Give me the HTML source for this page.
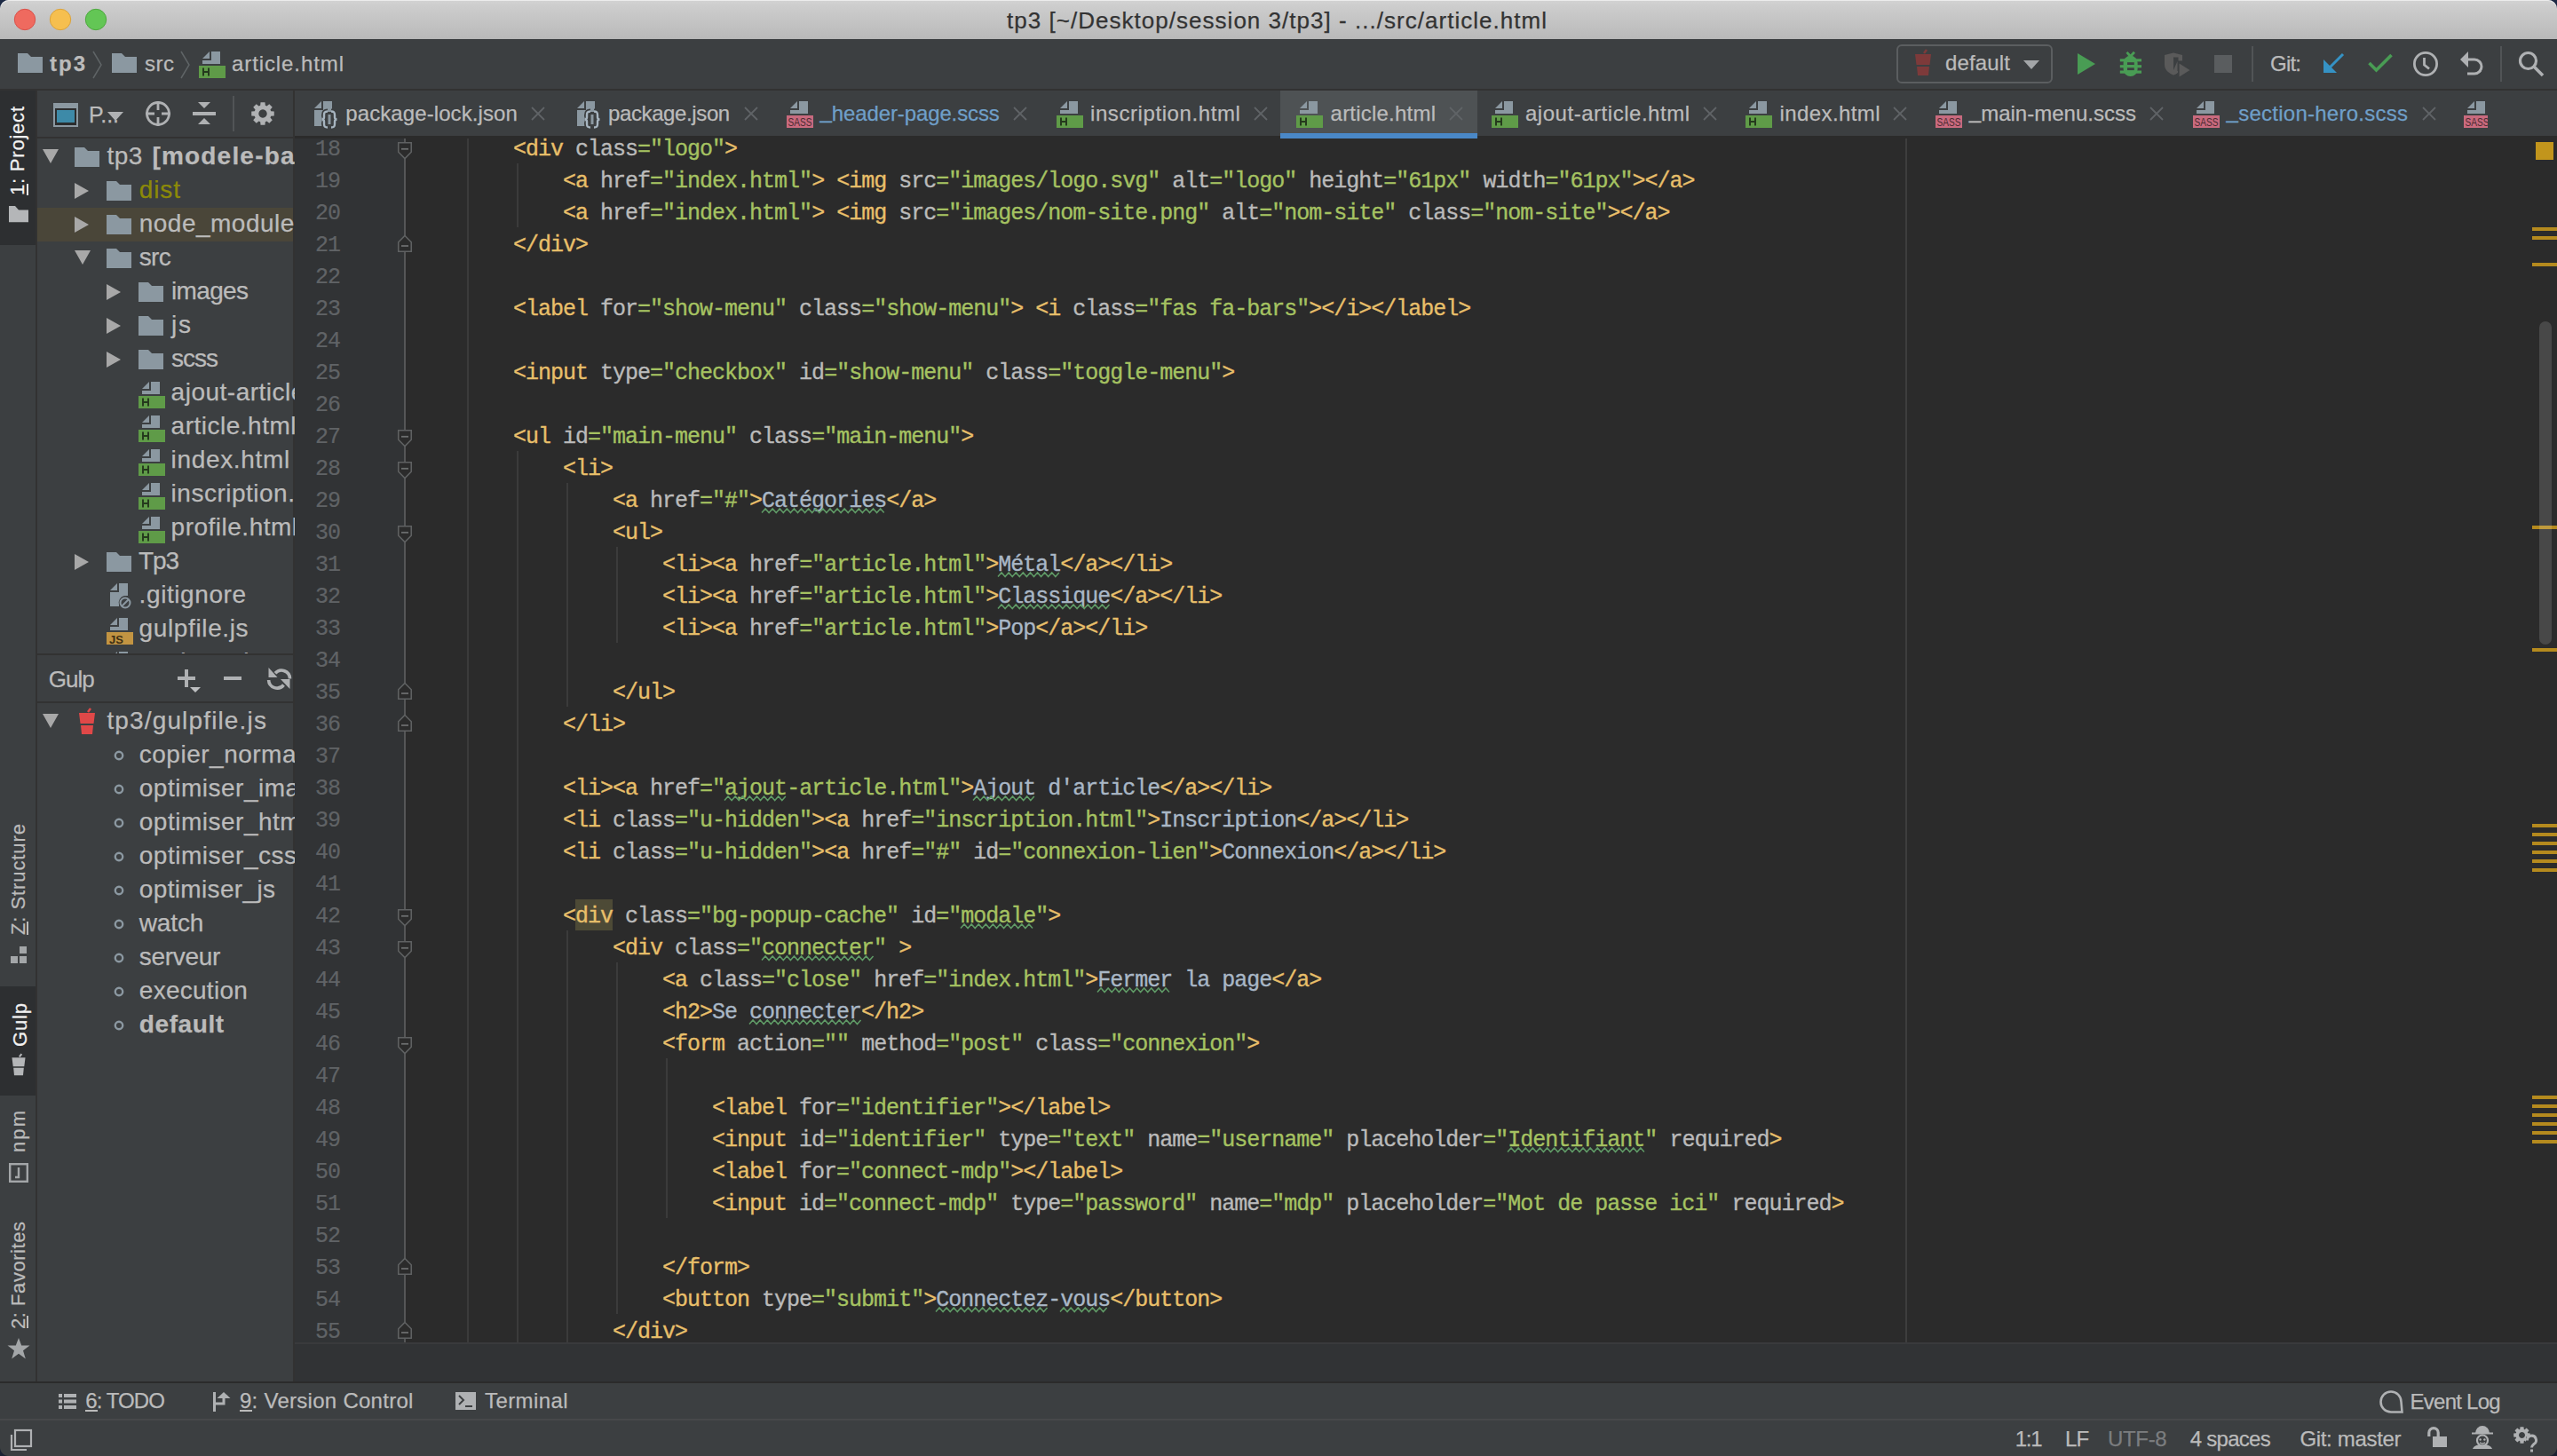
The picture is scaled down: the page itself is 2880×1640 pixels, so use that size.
<!DOCTYPE html>
<html><head><meta charset="utf-8"><title>tp3</title><style>*{margin:0;padding:0;box-sizing:border-box}
html,body{width:2880px;height:1640px;overflow:hidden;background:#3c3f41}
body{position:relative;font-family:"Liberation Sans",sans-serif}
.a{position:absolute}
svg.a{overflow:visible}
.t{position:absolute;white-space:pre;line-height:1;font-family:"Liberation Sans",sans-serif;-webkit-text-stroke:0.25px}
.code{position:absolute;left:522px;white-space:pre;font-family:"Liberation Mono",monospace;font-size:25px;letter-spacing:-1px;line-height:36px;color:#a9b7c6;-webkit-text-stroke:0.35px}
.ln{position:absolute;left:332px;width:51px;text-align:right;white-space:pre;font-family:"Liberation Mono",monospace;font-size:25px;letter-spacing:-1px;line-height:36px;color:#606366;-webkit-text-stroke:0.2px}
</style></head><body>
<div class="a" style="left:0px;top:0px;width:2880px;height:1640px;background:#3c3f41;"></div>
<div class="a" style="left:0;top:0;width:2880px;height:44px;background:#1d2a45"></div>
<div class="a" style="left:0;top:0;width:2880px;height:44px;border-radius:10px 10px 0 0;background:linear-gradient(#d3d3d3,#cdcdcd 15%,#b9b9b9);box-shadow:inset 0 1px 0 #ececec"></div>
<svg class="a" style="left:15px;top:9px;" width="26" height="26" viewBox="0 0 26 26"><circle cx="13" cy="13" r="11.7" fill="#ef6a5f" stroke="#d9514a" stroke-width="1"/></svg>
<svg class="a" style="left:55px;top:9px;" width="26" height="26" viewBox="0 0 26 26"><circle cx="13" cy="13" r="11.7" fill="#f6bf4f" stroke="#dba33b" stroke-width="1"/></svg>
<svg class="a" style="left:95px;top:9px;" width="26" height="26" viewBox="0 0 26 26"><circle cx="13" cy="13" r="11.7" fill="#63c655" stroke="#4ea83f" stroke-width="1"/></svg>
<div class="t" style="left:1134.0px;top:10.0px;font-size:26px;color:#333333;letter-spacing:1.027px;">tp3 [~/Desktop/session 3/tp3] - .../src/article.html</div>
<div class="a" style="left:0px;top:100px;width:2880px;height:2px;background:#323232;"></div>
<svg class="a" style="left:20px;top:60px;" width="28" height="22" viewBox="0 0 28 22"><path d="M0 0H11L15 4H28V22H0Z" fill="#8b98a1"/></svg>
<div class="t" style="left:56.0px;top:60.0px;font-size:24px;color:#bbbbbb;font-weight:700;letter-spacing:2.000px;">tp3</div>
<svg class="a" style="left:104px;top:58px;" width="12" height="30" viewBox="0 0 12 30"><path d="M1 0L10 15L1 30" stroke="#5f6466" stroke-width="1.5" fill="none"/></svg>
<svg class="a" style="left:126px;top:60px;" width="28" height="22" viewBox="0 0 28 22"><path d="M0 0H11L15 4H28V22H0Z" fill="#8b98a1"/></svg>
<div class="t" style="left:163.0px;top:60.0px;font-size:24px;color:#bbbbbb;letter-spacing:0.500px;">src</div>
<svg class="a" style="left:203px;top:58px;" width="12" height="30" viewBox="0 0 12 30"><path d="M1 0L10 15L1 30" stroke="#5f6466" stroke-width="1.5" fill="none"/></svg>
<svg class="a" style="left:224px;top:58px;" width="30" height="30" viewBox="0 0 30 30"><path d="M4 8L12 0V8Z" fill="#8b98a1"/><path d="M14 0H24V14H4V10H14Z" fill="#8b98a1"/><rect x="0" y="16" width="30" height="14" fill="#5f9b48"/><path d="M5 18.5V27.5M11 18.5V27.5M5 23H11" stroke="#253a1d" stroke-width="2" fill="none"/></svg>
<div class="t" style="left:261.0px;top:60.0px;font-size:24px;color:#bbbbbb;letter-spacing:0.906px;">article.html</div>
<div class="a" style="left:2136px;top:50px;width:176px;height:44px;border:2px solid #5b5e60;border-radius:6px"></div>
<svg class="a" style="left:2156px;top:56px;" width="20" height="30" viewBox="0 0 20 30"><path d="M11 4L14 0" stroke="#7d3a3a" stroke-width="2.5"/><path d="M1 5H19L17.5 17H2.5Z" fill="#7d3a3a"/><path d="M3 19H17L16 29H4Z" fill="#7d3a3a"/></svg>
<div class="t" style="left:2191.0px;top:59.0px;font-size:24px;color:#bbbbbb;letter-spacing:0.156px;">default</div>
<svg class="a" style="left:2279px;top:68px;" width="18" height="10" viewBox="0 0 18 10"><path d="M0 0H18L9 10Z" fill="#a3a6a8"/></svg>
<svg class="a" style="left:2340px;top:60px;" width="20" height="24" viewBox="0 0 20 24"><path d="M0 0L20 12L0 24Z" fill="#499c54"/></svg>
<svg class="a" style="left:2387px;top:58px;" width="26" height="30" viewBox="0 0 26 30"><path d="M8.5 0.8L12.6 5.5M17 0.8L12.6 5.5" stroke="#499c54" stroke-width="2.8"/><rect x="4.6" y="4.8" width="16" height="23.2" rx="8" fill="#499c54"/><rect x="0.8" y="8.3" width="24.2" height="3.1" fill="#499c54"/><rect x="0.8" y="15.2" width="24.2" height="3.1" fill="#499c54"/><rect x="0.8" y="21.5" width="24.2" height="3.2" fill="#499c54"/><rect x="9" y="12.2" width="7.8" height="2.8" fill="#3c3f41"/><rect x="9" y="18.3" width="7.8" height="2.8" fill="#3c3f41"/></svg>
<svg class="a" style="left:2437px;top:58px;" width="32" height="31" viewBox="0 0 32 31"><path d="M1 4L11 1.5L21 4V15C21 21 16 24.5 11 26.5C6 24.5 1 21 1 15Z" fill="#5a5a5a"/><path d="M11 6.5H16.5V10.5H21V22L11 22Z" fill="#3c3f41"/><path d="M11 6.5V21.5L15 19V10.5" fill="#3c3f41"/><path d="M15.5 11V24C13.5 25.5 12 26 11 26.5V21" fill="#5a5a5a"/><path d="M16.8 12L31 21L16.8 30Z" fill="#5a5a5a" stroke="#3c3f41" stroke-width="1.5"/></svg>
<div class="a" style="left:2494px;top:62px;width:20px;height:20px;background:#5a5d5f;"></div>
<div class="a" style="left:2536px;top:52px;width:2px;height:40px;background:#515456;"></div>
<div class="t" style="left:2557.0px;top:60.0px;font-size:24px;color:#bbbbbb;letter-spacing:-0.781px;">Git:</div>
<svg class="a" style="left:2617px;top:59px;" width="24" height="24" viewBox="0 0 24 24"><path d="M22 2L7 17" stroke="#3592c4" stroke-width="3"/><path d="M0 8V23H15Z" fill="#3592c4"/></svg>
<svg class="a" style="left:2667px;top:59px;" width="28" height="24" viewBox="0 0 28 24"><path d="M1.5 12L9.5 20L26.5 3" stroke="#499c54" stroke-width="3.6" fill="none"/></svg>
<svg class="a" style="left:2717px;top:57px;" width="30" height="30" viewBox="0 0 30 30"><circle cx="15" cy="15" r="12.6" stroke="#afb1b3" stroke-width="2.8" fill="none"/><path d="M13.5 8V16L19 20.5" stroke="#afb1b3" stroke-width="2.8" fill="none"/></svg>
<svg class="a" style="left:2771px;top:57px;" width="28" height="28" viewBox="0 0 28 28"><path d="M8 10H16A8 8 0 0 1 16 26H8" stroke="#afb1b3" stroke-width="3" fill="none"/><path d="M0 10L9 1V19Z" fill="#afb1b3"/></svg>
<div class="a" style="left:2816px;top:52px;width:2px;height:40px;background:#515456;"></div>
<svg class="a" style="left:2836px;top:57px;" width="30" height="30" viewBox="0 0 30 30"><circle cx="11.5" cy="11.5" r="9" stroke="#afb1b3" stroke-width="3.2" fill="none"/><path d="M18 18L28 28" stroke="#afb1b3" stroke-width="3.6"/></svg>
<div class="a" style="left:40px;top:102px;width:2px;height:1455px;background:#323232;"></div>
<div class="a" style="left:0px;top:102px;width:40px;height:174px;background:#2d2f31;"></div>
<div class="a" style="left:0px;top:1111px;width:40px;height:123px;background:#2d2f31;"></div>
<div class="t" style="left:9px;top:220px;font-size:22px;color:#f2f2f2;letter-spacing:0.785px;transform-origin:0 0;transform:rotate(-90deg)">1: Project</div>
<div class="a" style="left:30px;top:207px;width:2px;height:13px;background:#f2f2f2;"></div>
<svg class="a" style="left:10px;top:232px;" width="22" height="19" viewBox="0 0 22 19"><path d="M0 0H7L11 4.6H22V18.3H0Z" fill="#b4b6b8"/></svg>
<div class="t" style="left:10px;top:1053px;font-size:22px;color:#bbbbbb;letter-spacing:0.916px;transform-origin:0 0;transform:rotate(-90deg)">Z: Structure</div>
<div class="a" style="left:29.5px;top:1038px;width:2px;height:15px;background:#bbbbbb;"></div>
<svg class="a" style="left:12px;top:1066px;" width="18" height="19" viewBox="0 0 18 19"><rect x="0" y="11" width="8" height="8" fill="#a3a6a8"/><rect x="10" y="11" width="8" height="8" fill="#a3a6a8"/><rect x="10" y="0" width="8" height="8" fill="#a3a6a8"/></svg>
<div class="t" style="left:12px;top:1179px;font-size:22px;color:#f2f2f2;letter-spacing:0.839px;transform-origin:0 0;transform:rotate(-90deg)">Gulp</div>
<svg class="a" style="left:12px;top:1187px;" width="18" height="25" viewBox="0 0 20 30"><path d="M11 4L14 0" stroke="#b4b6b8" stroke-width="2.5"/><path d="M1 5H19L17.5 17H2.5Z" fill="#b4b6b8"/><path d="M3 19H17L16 29H4Z" fill="#b4b6b8"/></svg>
<div class="t" style="left:10px;top:1298px;font-size:22px;color:#bbbbbb;letter-spacing:2.102px;transform-origin:0 0;transform:rotate(-90deg)">npm</div>
<svg class="a" style="left:10px;top:1310px;" width="22" height="22" viewBox="0 0 22 22"><rect x="1.2" y="1.2" width="19.6" height="19.6" stroke="#a3a6a8" stroke-width="2.4" fill="none"/><path d="M11 5V16H7" stroke="#a3a6a8" stroke-width="2.4" fill="none"/></svg>
<div class="t" style="left:10px;top:1497px;font-size:22px;color:#bbbbbb;letter-spacing:0.551px;transform-origin:0 0;transform:rotate(-90deg)">2: Favorites</div>
<div class="a" style="left:30px;top:1482px;width:2px;height:14px;background:#bbbbbb;"></div>
<svg class="a" style="left:8px;top:1507px;" width="26" height="24" viewBox="0 0 26 24"><path d="M13 0L16.2 8.6H25.5L18 14.2L20.8 23.5L13 17.8L5.2 23.5L8 14.2L0.5 8.6H9.8Z" fill="#a3a6a8"/></svg>
<div class="a" style="left:330px;top:102px;width:2px;height:1455px;background:#323232;"></div>
<div class="a" style="left:42px;top:154px;width:288px;height:2px;background:#323232;"></div>
<svg class="a" style="left:60px;top:116px;" width="28" height="27" viewBox="0 0 28 27"><rect x="0" y="0" width="28" height="27" fill="#8b98a1"/><rect x="2" y="6" width="24" height="19" fill="#2b2d2e"/><rect x="4" y="8" width="20" height="14" fill="#3d8aa8"/></svg>
<div class="t" style="left:100.0px;top:117.0px;font-size:25px;color:#bbbbbb;letter-spacing:-0.099px;">P...</div>
<svg class="a" style="left:121px;top:126px;" width="18" height="10" viewBox="0 0 18 10"><path d="M0 0H18L9 10Z" fill="#afb1b3"/></svg>
<svg class="a" style="left:163px;top:113px;" width="30" height="30" viewBox="0 0 30 30"><circle cx="15" cy="15" r="12.5" stroke="#afb1b3" stroke-width="2.8" fill="none"/><path d="M15 1V11M15 19V29M1 15H11M19 15H29" stroke="#afb1b3" stroke-width="2.8"/></svg>
<svg class="a" style="left:217px;top:115px;" width="26" height="26" viewBox="0 0 26 26"><path d="M6 0H20L13 7Z" fill="#afb1b3"/><rect x="0" y="11" width="26" height="4" fill="#afb1b3"/><path d="M6 25H20L13 18Z" fill="#afb1b3"/></svg>
<div class="a" style="left:262px;top:108px;width:2px;height:40px;background:#515456;"></div>
<svg class="a" style="left:283px;top:115px;" width="26" height="26" viewBox="0 0 26 26"><path fill-rule="evenodd" fill="#afb1b3" d="M22.18 10.19L25.76 10.52L25.76 15.48L22.18 15.81L21.48 17.51L23.78 20.27L20.27 23.78L17.51 21.48L15.81 22.18L15.48 25.76L10.52 25.76L10.19 22.18L8.49 21.48L5.73 23.78L2.22 20.27L4.52 17.51L3.82 15.81L0.24 15.48L0.24 10.52L3.82 10.19L4.52 8.49L2.22 5.73L5.73 2.22L8.49 4.52L10.19 3.82L10.52 0.24L15.48 0.24L15.81 3.82L17.51 4.52L20.27 2.22L23.78 5.73L21.48 8.49Z M13 8.3A4.7 4.7 0 1 0 13.01 8.3Z"/></svg>
<div class="a" style="left:42px;top:234px;width:288px;height:38px;background:#4a4639;"></div>
<svg class="a" style="left:48px;top:168px;" width="18" height="16" viewBox="0 0 18 16"><path d="M0 0H18L9.0 16Z" fill="#a8a8a8"/></svg>
<svg class="a" style="left:84px;top:166px;" width="28" height="22" viewBox="0 0 28 22"><path d="M0 0H11L15 4H28V22H0Z" fill="#8b98a1"/></svg>
<div class="t" style="left:120.4px;top:162.0px;font-size:28px;color:#bbbbbb;letter-spacing:0.531px;">tp3</div>
<div class="t" style="left:171.4px;top:162.0px;font-size:28px;color:#bbbbbb;font-weight:700;letter-spacing:1.200px;">[modele-base]</div>
<svg class="a" style="left:84px;top:206px;" width="16" height="18" viewBox="0 0 16 18"><path d="M0 0L16 9.0L0 18Z" fill="#a8a8a8"/></svg>
<svg class="a" style="left:120px;top:204px;" width="28" height="22" viewBox="0 0 28 22"><path d="M0 0H11L15 4H28V22H0Z" fill="#8b98a1"/></svg>
<div class="t" style="left:156.7px;top:200.0px;font-size:28px;color:#8c8a08;letter-spacing:0.907px;">dist</div>
<svg class="a" style="left:84px;top:244px;" width="16" height="18" viewBox="0 0 16 18"><path d="M0 0L16 9.0L0 18Z" fill="#a8a8a8"/></svg>
<svg class="a" style="left:120px;top:242px;" width="28" height="22" viewBox="0 0 28 22"><path d="M0 0H11L15 4H28V22H0Z" fill="#8b98a1"/></svg>
<div class="t" style="left:156.7px;top:238.0px;font-size:28px;color:#bbbbbb;letter-spacing:0.500px;">node_modules</div>
<svg class="a" style="left:84px;top:282px;" width="18" height="16" viewBox="0 0 18 16"><path d="M0 0H18L9.0 16Z" fill="#a8a8a8"/></svg>
<svg class="a" style="left:120px;top:280px;" width="28" height="22" viewBox="0 0 28 22"><path d="M0 0H11L15 4H28V22H0Z" fill="#8b98a1"/></svg>
<div class="t" style="left:156.7px;top:276.0px;font-size:28px;color:#bbbbbb;letter-spacing:-0.664px;">src</div>
<svg class="a" style="left:120px;top:320px;" width="16" height="18" viewBox="0 0 16 18"><path d="M0 0L16 9.0L0 18Z" fill="#a8a8a8"/></svg>
<svg class="a" style="left:156px;top:318px;" width="28" height="22" viewBox="0 0 28 22"><path d="M0 0H11L15 4H28V22H0Z" fill="#8b98a1"/></svg>
<div class="t" style="left:193.0px;top:314.0px;font-size:28px;color:#bbbbbb;letter-spacing:-0.653px;">images</div>
<svg class="a" style="left:120px;top:358px;" width="16" height="18" viewBox="0 0 16 18"><path d="M0 0L16 9.0L0 18Z" fill="#a8a8a8"/></svg>
<svg class="a" style="left:156px;top:356px;" width="28" height="22" viewBox="0 0 28 22"><path d="M0 0H11L15 4H28V22H0Z" fill="#8b98a1"/></svg>
<div class="t" style="left:193.0px;top:352.0px;font-size:28px;color:#bbbbbb;letter-spacing:1.766px;">js</div>
<svg class="a" style="left:120px;top:396px;" width="16" height="18" viewBox="0 0 16 18"><path d="M0 0L16 9.0L0 18Z" fill="#a8a8a8"/></svg>
<svg class="a" style="left:156px;top:394px;" width="28" height="22" viewBox="0 0 28 22"><path d="M0 0H11L15 4H28V22H0Z" fill="#8b98a1"/></svg>
<div class="t" style="left:193.0px;top:390.0px;font-size:28px;color:#bbbbbb;letter-spacing:-1.000px;">scss</div>
<svg class="a" style="left:156px;top:430px;" width="30" height="30" viewBox="0 0 30 30"><path d="M4 8L12 0V8Z" fill="#8b98a1"/><path d="M14 0H24V14H4V10H14Z" fill="#8b98a1"/><rect x="0" y="16" width="30" height="14" fill="#5f9b48"/><path d="M5 18.5V27.5M11 18.5V27.5M5 23H11" stroke="#253a1d" stroke-width="2" fill="none"/></svg>
<div class="t" style="left:192.6px;top:428.0px;font-size:28px;color:#bbbbbb;letter-spacing:0.500px;">ajout-article.html</div>
<svg class="a" style="left:156px;top:468px;" width="30" height="30" viewBox="0 0 30 30"><path d="M4 8L12 0V8Z" fill="#8b98a1"/><path d="M14 0H24V14H4V10H14Z" fill="#8b98a1"/><rect x="0" y="16" width="30" height="14" fill="#5f9b48"/><path d="M5 18.5V27.5M11 18.5V27.5M5 23H11" stroke="#253a1d" stroke-width="2" fill="none"/></svg>
<div class="t" style="left:192.6px;top:466.0px;font-size:28px;color:#bbbbbb;letter-spacing:0.500px;">article.html</div>
<svg class="a" style="left:156px;top:506px;" width="30" height="30" viewBox="0 0 30 30"><path d="M4 8L12 0V8Z" fill="#8b98a1"/><path d="M14 0H24V14H4V10H14Z" fill="#8b98a1"/><rect x="0" y="16" width="30" height="14" fill="#5f9b48"/><path d="M5 18.5V27.5M11 18.5V27.5M5 23H11" stroke="#253a1d" stroke-width="2" fill="none"/></svg>
<div class="t" style="left:192.6px;top:504.0px;font-size:28px;color:#bbbbbb;letter-spacing:0.664px;">index.html</div>
<svg class="a" style="left:156px;top:544px;" width="30" height="30" viewBox="0 0 30 30"><path d="M4 8L12 0V8Z" fill="#8b98a1"/><path d="M14 0H24V14H4V10H14Z" fill="#8b98a1"/><rect x="0" y="16" width="30" height="14" fill="#5f9b48"/><path d="M5 18.5V27.5M11 18.5V27.5M5 23H11" stroke="#253a1d" stroke-width="2" fill="none"/></svg>
<div class="t" style="left:192.6px;top:542.0px;font-size:28px;color:#bbbbbb;letter-spacing:0.500px;">inscription.html</div>
<svg class="a" style="left:156px;top:582px;" width="30" height="30" viewBox="0 0 30 30"><path d="M4 8L12 0V8Z" fill="#8b98a1"/><path d="M14 0H24V14H4V10H14Z" fill="#8b98a1"/><rect x="0" y="16" width="30" height="14" fill="#5f9b48"/><path d="M5 18.5V27.5M11 18.5V27.5M5 23H11" stroke="#253a1d" stroke-width="2" fill="none"/></svg>
<div class="t" style="left:192.6px;top:580.0px;font-size:28px;color:#bbbbbb;letter-spacing:0.500px;">profile.html</div>
<svg class="a" style="left:84px;top:624px;" width="16" height="18" viewBox="0 0 16 18"><path d="M0 0L16 9.0L0 18Z" fill="#a8a8a8"/></svg>
<svg class="a" style="left:120px;top:622px;" width="28" height="22" viewBox="0 0 28 22"><path d="M0 0H11L15 4H28V22H0Z" fill="#8b98a1"/></svg>
<div class="t" style="left:156.0px;top:618.0px;font-size:28px;color:#bbbbbb;letter-spacing:-1.125px;">Tp3</div>
<svg class="a" style="left:124px;top:657px;" width="26" height="30" viewBox="0 0 26 30"><path d="M0 8L8 0V8Z" fill="#8b98a1"/><path d="M10 0H20V14H16A8 8 0 0 0 10 24V26H0V10H10Z" fill="#8b98a1"/><circle cx="17" cy="22" r="5.5" stroke="#8b98a1" stroke-width="2" fill="none"/><path d="M13.5 25.5L20.5 18.5" stroke="#8b98a1" stroke-width="2"/></svg>
<div class="t" style="left:156.6px;top:656.0px;font-size:28px;color:#bbbbbb;letter-spacing:0.590px;">.gitignore</div>
<svg class="a" style="left:120px;top:696px;" width="30" height="30" viewBox="0 0 30 30"><path d="M4 8L12 0V8Z" fill="#8b98a1"/><path d="M14 0H24V14H4V10H14Z" fill="#8b98a1"/><rect x="0" y="16" width="30" height="14" fill="#c29442"/><text x="3" y="28.5" font-family="Liberation Sans" font-size="13" font-weight="700" fill="#3d2e14">JS</text></svg>
<div class="t" style="left:156.6px;top:694.0px;font-size:28px;color:#bbbbbb;letter-spacing:0.627px;">gulpfile.js</div>
<svg class="a" style="left:120px;top:733px;" width="30" height="30" viewBox="0 0 30 30"><path d="M4 9L12 1V9Z" fill="#8b98a1"/><path d="M14 1H24V13H14Z" fill="#8b98a1"/><path d="M4 11H14V29H4Z" fill="#8b98a1"/><path d="M19 12.5C15.5 12.5 15 14 15 16.5V19C15 20.5 14.2 21.5 12.5 21.5C14.2 21.5 15 22.5 15 24V26.5C15 29 15.5 30.5 19 30.5M21 14V29M23 12.5C26.5 12.5 27 14 27 16.5V19C27 20.5 27.8 21.5 29.5 21.5C27.8 21.5 27 22.5 27 24V26.5C27 29 26.5 30.5 23 30.5" stroke="#3c3f41" stroke-width="6" fill="none"/><path d="M21 16V27" stroke="#8b98a1" stroke-width="3"/><path d="M19 12.5C15.5 12.5 15 14 15 16.5V19C15 20.5 14.2 21.5 12.5 21.5C14.2 21.5 15 22.5 15 24V26.5C15 29 15.5 30.5 19 30.5M23 12.5C26.5 12.5 27 14 27 16.5V19C27 20.5 27.8 21.5 29.5 21.5C27.8 21.5 27 22.5 27 24V26.5C27 29 26.5 30.5 23 30.5" stroke="#a7b5c0" stroke-width="2.4" fill="none"/></svg>
<div class="t" style="left:156.6px;top:732.0px;font-size:28px;color:#bbbbbb;letter-spacing:0.500px;">package.json</div>
<div class="a" style="left:42px;top:736px;width:288px;height:2px;background:#323232;"></div>
<div class="a" style="left:42px;top:738px;width:288px;height:819px;background:#3c3f41;"></div>
<div class="a" style="left:42px;top:790px;width:288px;height:2px;background:#323232;"></div>
<div class="t" style="left:54.8px;top:752.4px;font-size:26px;color:#bbbbbb;letter-spacing:-1.041px;">Gulp</div>
<svg class="a" style="left:200px;top:752px;" width="28" height="30" viewBox="0 0 28 30"><path d="M10 2V22M0 12H20" stroke="#afb1b3" stroke-width="4"/><path d="M14 22H26L20 28Z" fill="#bdbfc1"/></svg>
<div class="a" style="left:252px;top:762px;width:20px;height:4px;background:#afb1b3;"></div>
<svg class="a" style="left:301.5px;top:752px;" width="25" height="25" viewBox="0 0 25 25"><path d="M8 6.2A9.5 9.5 0 0 1 24.5 12.5" stroke="#afb1b3" stroke-width="3.6" fill="none"/><path d="M0.5 0V11H10.5Z" fill="#afb1b3"/><path d="M0.6 14A9.5 9.5 0 0 0 17.5 19.5" stroke="#afb1b3" stroke-width="3.6" fill="none"/><path d="M24.5 24V13H14Z" fill="#afb1b3"/></svg>
<svg class="a" style="left:48px;top:804px;" width="18" height="16" viewBox="0 0 18 16"><path d="M0 0H18L9.0 16Z" fill="#a8a8a8"/></svg>
<svg class="a" style="left:88px;top:798px;" width="20" height="30" viewBox="0 0 20 30"><path d="M11 4L14 0" stroke="#e04848" stroke-width="2.5"/><path d="M1 5H19L17.5 17H2.5Z" fill="#e04848"/><path d="M3 19H17L16 29H4Z" fill="#e04848"/></svg>
<div class="t" style="left:120.4px;top:798.0px;font-size:28px;color:#bbbbbb;letter-spacing:1.147px;">tp3/gulpfile.js</div>
<svg class="a" style="left:128px;top:845px;" width="12" height="12" viewBox="0 0 12 12"><circle cx="6" cy="6" r="4.2" stroke="#8b98a1" stroke-width="2.4" fill="none"/></svg>
<div class="t" style="left:156.8px;top:835.6px;font-size:28px;color:#bbbbbb;letter-spacing:0.500px;">copier_normaux</div>
<svg class="a" style="left:128px;top:883px;" width="12" height="12" viewBox="0 0 12 12"><circle cx="6" cy="6" r="4.2" stroke="#8b98a1" stroke-width="2.4" fill="none"/></svg>
<div class="t" style="left:156.8px;top:873.6px;font-size:28px;color:#bbbbbb;letter-spacing:0.500px;">optimiser_images</div>
<svg class="a" style="left:128px;top:921px;" width="12" height="12" viewBox="0 0 12 12"><circle cx="6" cy="6" r="4.2" stroke="#8b98a1" stroke-width="2.4" fill="none"/></svg>
<div class="t" style="left:156.8px;top:911.6px;font-size:28px;color:#bbbbbb;letter-spacing:0.500px;">optimiser_html</div>
<svg class="a" style="left:128px;top:959px;" width="12" height="12" viewBox="0 0 12 12"><circle cx="6" cy="6" r="4.2" stroke="#8b98a1" stroke-width="2.4" fill="none"/></svg>
<div class="t" style="left:156.8px;top:949.6px;font-size:28px;color:#bbbbbb;letter-spacing:0.500px;">optimiser_css</div>
<svg class="a" style="left:128px;top:997px;" width="12" height="12" viewBox="0 0 12 12"><circle cx="6" cy="6" r="4.2" stroke="#8b98a1" stroke-width="2.4" fill="none"/></svg>
<div class="t" style="left:156.8px;top:987.6px;font-size:28px;color:#bbbbbb;letter-spacing:0.346px;">optimiser_js</div>
<svg class="a" style="left:128px;top:1035px;" width="12" height="12" viewBox="0 0 12 12"><circle cx="6" cy="6" r="4.2" stroke="#8b98a1" stroke-width="2.4" fill="none"/></svg>
<div class="t" style="left:156.8px;top:1025.6px;font-size:28px;color:#bbbbbb;letter-spacing:-0.164px;">watch</div>
<svg class="a" style="left:128px;top:1073px;" width="12" height="12" viewBox="0 0 12 12"><circle cx="6" cy="6" r="4.2" stroke="#8b98a1" stroke-width="2.4" fill="none"/></svg>
<div class="t" style="left:156.8px;top:1063.6px;font-size:28px;color:#bbbbbb;letter-spacing:-0.296px;">serveur</div>
<svg class="a" style="left:128px;top:1111px;" width="12" height="12" viewBox="0 0 12 12"><circle cx="6" cy="6" r="4.2" stroke="#8b98a1" stroke-width="2.4" fill="none"/></svg>
<div class="t" style="left:156.8px;top:1101.6px;font-size:28px;color:#bbbbbb;letter-spacing:0.266px;">execution</div>
<svg class="a" style="left:128px;top:1149px;" width="12" height="12" viewBox="0 0 12 12"><circle cx="6" cy="6" r="4.2" stroke="#8b98a1" stroke-width="2.4" fill="none"/></svg>
<div class="t" style="left:156.8px;top:1139.6px;font-size:28px;color:#bbbbbb;font-weight:700;letter-spacing:0.586px;">default</div>
<div class="a" style="left:332px;top:102px;width:2548px;height:52px;background:#3c3f41;"></div>
<div class="a" style="left:332px;top:153px;width:2548px;height:3px;background:#2b2b2b;"></div>
<div class="a" style="left:1442px;top:102px;width:222px;height:48px;background:#4e5254;"></div>
<div class="a" style="left:1442px;top:150px;width:222px;height:6px;background:#4a88c7;"></div>
<svg class="a" style="left:350px;top:113px;" width="30" height="30" viewBox="0 0 30 30"><path d="M4 9L12 1V9Z" fill="#8b98a1"/><path d="M14 1H24V13H14Z" fill="#8b98a1"/><path d="M4 11H14V29H4Z" fill="#8b98a1"/><path d="M19 12.5C15.5 12.5 15 14 15 16.5V19C15 20.5 14.2 21.5 12.5 21.5C14.2 21.5 15 22.5 15 24V26.5C15 29 15.5 30.5 19 30.5M21 14V29M23 12.5C26.5 12.5 27 14 27 16.5V19C27 20.5 27.8 21.5 29.5 21.5C27.8 21.5 27 22.5 27 24V26.5C27 29 26.5 30.5 23 30.5" stroke="#3c3f41" stroke-width="6" fill="none"/><path d="M21 16V27" stroke="#8b98a1" stroke-width="3"/><path d="M19 12.5C15.5 12.5 15 14 15 16.5V19C15 20.5 14.2 21.5 12.5 21.5C14.2 21.5 15 22.5 15 24V26.5C15 29 15.5 30.5 19 30.5M23 12.5C26.5 12.5 27 14 27 16.5V19C27 20.5 27.8 21.5 29.5 21.5C27.8 21.5 27 22.5 27 24V26.5C27 29 26.5 30.5 23 30.5" stroke="#a7b5c0" stroke-width="2.4" fill="none"/></svg>
<div class="t" style="left:389.3px;top:116.0px;font-size:24px;color:#bbbbbb;letter-spacing:0.087px;">package-lock.json</div>
<svg class="a" style="left:597.7px;top:120px;" width="16" height="16" viewBox="0 0 16 16"><path d="M1 1L15 15M15 1L1 15" stroke="#5f6366" stroke-width="1.8"/></svg>
<svg class="a" style="left:646px;top:113px;" width="30" height="30" viewBox="0 0 30 30"><path d="M4 9L12 1V9Z" fill="#8b98a1"/><path d="M14 1H24V13H14Z" fill="#8b98a1"/><path d="M4 11H14V29H4Z" fill="#8b98a1"/><path d="M19 12.5C15.5 12.5 15 14 15 16.5V19C15 20.5 14.2 21.5 12.5 21.5C14.2 21.5 15 22.5 15 24V26.5C15 29 15.5 30.5 19 30.5M21 14V29M23 12.5C26.5 12.5 27 14 27 16.5V19C27 20.5 27.8 21.5 29.5 21.5C27.8 21.5 27 22.5 27 24V26.5C27 29 26.5 30.5 23 30.5" stroke="#3c3f41" stroke-width="6" fill="none"/><path d="M21 16V27" stroke="#8b98a1" stroke-width="3"/><path d="M19 12.5C15.5 12.5 15 14 15 16.5V19C15 20.5 14.2 21.5 12.5 21.5C14.2 21.5 15 22.5 15 24V26.5C15 29 15.5 30.5 19 30.5M23 12.5C26.5 12.5 27 14 27 16.5V19C27 20.5 27.8 21.5 29.5 21.5C27.8 21.5 27 22.5 27 24V26.5C27 29 26.5 30.5 23 30.5" stroke="#a7b5c0" stroke-width="2.4" fill="none"/></svg>
<div class="t" style="left:685.0px;top:116.0px;font-size:24px;color:#bbbbbb;letter-spacing:-0.385px;">package.json</div>
<svg class="a" style="left:837.6px;top:120px;" width="16" height="16" viewBox="0 0 16 16"><path d="M1 1L15 15M15 1L1 15" stroke="#5f6366" stroke-width="1.8"/></svg>
<svg class="a" style="left:886px;top:114px;" width="30" height="30" viewBox="0 0 30 30"><path d="M4 8L12 0V8Z" fill="#8b98a1"/><path d="M14 0H24V14H4V10H14Z" fill="#8b98a1"/><rect x="0" y="16" width="30" height="14" fill="#c96a7e"/><text x="15" y="28" font-family="Liberation Sans" font-size="12" fill="#4b2a31" text-anchor="middle" textLength="27" lengthAdjust="spacingAndGlyphs">SASS</text></svg>
<div class="t" style="left:923.6px;top:116.0px;font-size:24px;color:#6f9fc9;letter-spacing:-0.121px;"><span style="position:relative;top:-3px">_</span>header-page.scss</div>
<svg class="a" style="left:1141px;top:120px;" width="16" height="16" viewBox="0 0 16 16"><path d="M1 1L15 15M15 1L1 15" stroke="#5f6366" stroke-width="1.8"/></svg>
<svg class="a" style="left:1189.5px;top:114px;" width="30" height="30" viewBox="0 0 30 30"><path d="M4 8L12 0V8Z" fill="#8b98a1"/><path d="M14 0H24V14H4V10H14Z" fill="#8b98a1"/><rect x="0" y="16" width="30" height="14" fill="#5f9b48"/><path d="M5 18.5V27.5M11 18.5V27.5M5 23H11" stroke="#253a1d" stroke-width="2" fill="none"/></svg>
<div class="t" style="left:1228.0px;top:116.0px;font-size:24px;color:#bbbbbb;letter-spacing:0.583px;">inscription.html</div>
<svg class="a" style="left:1412px;top:120px;" width="16" height="16" viewBox="0 0 16 16"><path d="M1 1L15 15M15 1L1 15" stroke="#5f6366" stroke-width="1.8"/></svg>
<svg class="a" style="left:1460px;top:114px;" width="30" height="30" viewBox="0 0 30 30"><path d="M4 8L12 0V8Z" fill="#8b98a1"/><path d="M14 0H24V14H4V10H14Z" fill="#8b98a1"/><rect x="0" y="16" width="30" height="14" fill="#5f9b48"/><path d="M5 18.5V27.5M11 18.5V27.5M5 23H11" stroke="#253a1d" stroke-width="2" fill="none"/></svg>
<div class="t" style="left:1498.6px;top:116.0px;font-size:24px;color:#bbbbbb;letter-spacing:0.215px;">article.html</div>
<svg class="a" style="left:1632px;top:120px;" width="16" height="16" viewBox="0 0 16 16"><path d="M1 1L15 15M15 1L1 15" stroke="#5f6366" stroke-width="1.8"/></svg>
<svg class="a" style="left:1680px;top:114px;" width="30" height="30" viewBox="0 0 30 30"><path d="M4 8L12 0V8Z" fill="#8b98a1"/><path d="M14 0H24V14H4V10H14Z" fill="#8b98a1"/><rect x="0" y="16" width="30" height="14" fill="#5f9b48"/><path d="M5 18.5V27.5M11 18.5V27.5M5 23H11" stroke="#253a1d" stroke-width="2" fill="none"/></svg>
<div class="t" style="left:1718.0px;top:116.0px;font-size:24px;color:#bbbbbb;letter-spacing:0.526px;">ajout-article.html</div>
<svg class="a" style="left:1918px;top:120px;" width="16" height="16" viewBox="0 0 16 16"><path d="M1 1L15 15M15 1L1 15" stroke="#5f6366" stroke-width="1.8"/></svg>
<svg class="a" style="left:1966px;top:114px;" width="30" height="30" viewBox="0 0 30 30"><path d="M4 8L12 0V8Z" fill="#8b98a1"/><path d="M14 0H24V14H4V10H14Z" fill="#8b98a1"/><rect x="0" y="16" width="30" height="14" fill="#5f9b48"/><path d="M5 18.5V27.5M11 18.5V27.5M5 23H11" stroke="#253a1d" stroke-width="2" fill="none"/></svg>
<div class="t" style="left:2004.6px;top:116.0px;font-size:24px;color:#bbbbbb;letter-spacing:0.401px;">index.html</div>
<svg class="a" style="left:2132px;top:120px;" width="16" height="16" viewBox="0 0 16 16"><path d="M1 1L15 15M15 1L1 15" stroke="#5f6366" stroke-width="1.8"/></svg>
<svg class="a" style="left:2180px;top:114px;" width="30" height="30" viewBox="0 0 30 30"><path d="M4 8L12 0V8Z" fill="#8b98a1"/><path d="M14 0H24V14H4V10H14Z" fill="#8b98a1"/><rect x="0" y="16" width="30" height="14" fill="#c96a7e"/><text x="15" y="28" font-family="Liberation Sans" font-size="12" fill="#4b2a31" text-anchor="middle" textLength="27" lengthAdjust="spacingAndGlyphs">SASS</text></svg>
<div class="t" style="left:2217.8px;top:116.0px;font-size:24px;color:#bbbbbb;letter-spacing:0.010px;"><span style="position:relative;top:-3px">_</span>main-menu.scss</div>
<svg class="a" style="left:2421px;top:120px;" width="16" height="16" viewBox="0 0 16 16"><path d="M1 1L15 15M15 1L1 15" stroke="#5f6366" stroke-width="1.8"/></svg>
<svg class="a" style="left:2470px;top:114px;" width="30" height="30" viewBox="0 0 30 30"><path d="M4 8L12 0V8Z" fill="#8b98a1"/><path d="M14 0H24V14H4V10H14Z" fill="#8b98a1"/><rect x="0" y="16" width="30" height="14" fill="#c96a7e"/><text x="15" y="28" font-family="Liberation Sans" font-size="12" fill="#4b2a31" text-anchor="middle" textLength="27" lengthAdjust="spacingAndGlyphs">SASS</text></svg>
<div class="t" style="left:2507.6px;top:116.0px;font-size:24px;color:#6f9fc9;letter-spacing:0.253px;"><span style="position:relative;top:-3px">_</span>section-hero.scss</div>
<svg class="a" style="left:2728px;top:120px;" width="16" height="16" viewBox="0 0 16 16"><path d="M1 1L15 15M15 1L1 15" stroke="#5f6366" stroke-width="1.8"/></svg>
<svg class="a" style="left:2775px;top:114px;" width="30" height="30" viewBox="0 0 30 30"><path d="M4 8L12 0V8Z" fill="#8b98a1"/><path d="M14 0H24V14H4V10H14Z" fill="#8b98a1"/><rect x="0" y="16" width="30" height="14" fill="#c96a7e"/><text x="15" y="28" font-family="Liberation Sans" font-size="12" fill="#4b2a31" text-anchor="middle" textLength="27" lengthAdjust="spacingAndGlyphs">SASS</text></svg>
<div class="a" style="left:2802px;top:102px;width:78px;height:51px;background:#3c3f41;"></div>
<div class="a" style="left:332px;top:156px;width:2548px;height:1356px;background:#2b2b2b;"></div>
<div class="a" style="left:332px;top:156px;width:124px;height:1356px;background:#313335;"></div>
<div class="a" style="left:455px;top:156px;width:1.6px;height:1356px;background:#555657;"></div>
<div class="a" style="left:2146px;top:156px;width:1.5px;height:1356px;background:#3e3e3e;"></div>
<div class="a" style="left:332px;top:1512px;width:2548px;height:2px;background:#393a3c;"></div>
<div class="a" style="left:332px;top:1514px;width:2548px;height:43px;background:#313335;"></div>
<div class="a" style="left:526px;top:156px;width:1.5px;height:1356px;background:#3b3b3b;"></div>
<div class="a" style="left:582px;top:184px;width:1.5px;height:72px;background:#3b3b3b;"></div>
<div class="a" style="left:582px;top:508px;width:1.5px;height:1004px;background:#3b3b3b;"></div>
<div class="a" style="left:638px;top:544px;width:1.5px;height:252px;background:#3b3b3b;"></div>
<div class="a" style="left:694px;top:616px;width:1.5px;height:108px;background:#3b3b3b;"></div>
<div class="a" style="left:638px;top:1048px;width:1.5px;height:464px;background:#3b3b3b;"></div>
<div class="a" style="left:694px;top:1084px;width:1.5px;height:396px;background:#3b3b3b;"></div>
<div class="a" style="left:750px;top:1192px;width:1.5px;height:180px;background:#3b3b3b;"></div>
<div class="a" style="left:648px;top:1013px;width:42px;height:35px;background:#4d4a36;"></div>
<div class="code" style="top:151px">    <span style="color:#e8bf6a">&lt;div</span> <span style="color:#bababa">class</span><span style="color:#a5c261">="logo"</span><span style="color:#e8bf6a">&gt;</span></div><div class="ln" style="top:151px">18</div><div class="code" style="top:187px">        <span style="color:#e8bf6a">&lt;a</span> <span style="color:#bababa">href</span><span style="color:#a5c261">="index.html"</span><span style="color:#e8bf6a">&gt;</span> <span style="color:#e8bf6a">&lt;img</span> <span style="color:#bababa">src</span><span style="color:#a5c261">="images/logo.svg"</span> <span style="color:#bababa">alt</span><span style="color:#a5c261">="logo"</span> <span style="color:#bababa">height</span><span style="color:#a5c261">="61px"</span> <span style="color:#bababa">width</span><span style="color:#a5c261">="61px"</span><span style="color:#e8bf6a">&gt;</span><span style="color:#e8bf6a">&lt;/a</span><span style="color:#e8bf6a">&gt;</span></div><div class="ln" style="top:187px">19</div><div class="code" style="top:223px">        <span style="color:#e8bf6a">&lt;a</span> <span style="color:#bababa">href</span><span style="color:#a5c261">="index.html"</span><span style="color:#e8bf6a">&gt;</span> <span style="color:#e8bf6a">&lt;img</span> <span style="color:#bababa">src</span><span style="color:#a5c261">="images/nom-site.png"</span> <span style="color:#bababa">alt</span><span style="color:#a5c261">="nom-site"</span> <span style="color:#bababa">class</span><span style="color:#a5c261">="nom-site"</span><span style="color:#e8bf6a">&gt;</span><span style="color:#e8bf6a">&lt;/a</span><span style="color:#e8bf6a">&gt;</span></div><div class="ln" style="top:223px">20</div><div class="code" style="top:259px">    <span style="color:#e8bf6a">&lt;/div</span><span style="color:#e8bf6a">&gt;</span></div><div class="ln" style="top:259px">21</div><div class="code" style="top:295px"></div><div class="ln" style="top:295px">22</div><div class="code" style="top:331px">    <span style="color:#e8bf6a">&lt;label</span> <span style="color:#bababa">for</span><span style="color:#a5c261">="show-menu"</span> <span style="color:#bababa">class</span><span style="color:#a5c261">="show-menu"</span><span style="color:#e8bf6a">&gt;</span> <span style="color:#e8bf6a">&lt;i</span> <span style="color:#bababa">class</span><span style="color:#a5c261">="fas fa-bars"</span><span style="color:#e8bf6a">&gt;</span><span style="color:#e8bf6a">&lt;/i</span><span style="color:#e8bf6a">&gt;</span><span style="color:#e8bf6a">&lt;/label</span><span style="color:#e8bf6a">&gt;</span></div><div class="ln" style="top:331px">23</div><div class="code" style="top:367px"></div><div class="ln" style="top:367px">24</div><div class="code" style="top:403px">    <span style="color:#e8bf6a">&lt;input</span> <span style="color:#bababa">type</span><span style="color:#a5c261">="checkbox"</span> <span style="color:#bababa">id</span><span style="color:#a5c261">="show-menu"</span> <span style="color:#bababa">class</span><span style="color:#a5c261">="toggle-menu"</span><span style="color:#e8bf6a">&gt;</span></div><div class="ln" style="top:403px">25</div><div class="code" style="top:439px"></div><div class="ln" style="top:439px">26</div><div class="code" style="top:475px">    <span style="color:#e8bf6a">&lt;ul</span> <span style="color:#bababa">id</span><span style="color:#a5c261">="main-menu"</span> <span style="color:#bababa">class</span><span style="color:#a5c261">="main-menu"</span><span style="color:#e8bf6a">&gt;</span></div><div class="ln" style="top:475px">27</div><div class="code" style="top:511px">        <span style="color:#e8bf6a">&lt;li</span><span style="color:#e8bf6a">&gt;</span></div><div class="ln" style="top:511px">28</div><div class="code" style="top:547px">            <span style="color:#e8bf6a">&lt;a</span> <span style="color:#bababa">href</span><span style="color:#a5c261">="#"</span><span style="color:#e8bf6a">&gt;</span><span style="color:#a9b7c6">Catégories</span><span style="color:#e8bf6a">&lt;/a</span><span style="color:#e8bf6a">&gt;</span></div><div class="ln" style="top:547px">29</div><div class="code" style="top:583px">            <span style="color:#e8bf6a">&lt;ul</span><span style="color:#e8bf6a">&gt;</span></div><div class="ln" style="top:583px">30</div><div class="code" style="top:619px">                <span style="color:#e8bf6a">&lt;li</span><span style="color:#e8bf6a">&gt;</span><span style="color:#e8bf6a">&lt;a</span> <span style="color:#bababa">href</span><span style="color:#a5c261">="article.html"</span><span style="color:#e8bf6a">&gt;</span><span style="color:#a9b7c6">Métal</span><span style="color:#e8bf6a">&lt;/a</span><span style="color:#e8bf6a">&gt;</span><span style="color:#e8bf6a">&lt;/li</span><span style="color:#e8bf6a">&gt;</span></div><div class="ln" style="top:619px">31</div><div class="code" style="top:655px">                <span style="color:#e8bf6a">&lt;li</span><span style="color:#e8bf6a">&gt;</span><span style="color:#e8bf6a">&lt;a</span> <span style="color:#bababa">href</span><span style="color:#a5c261">="article.html"</span><span style="color:#e8bf6a">&gt;</span><span style="color:#a9b7c6">Classique</span><span style="color:#e8bf6a">&lt;/a</span><span style="color:#e8bf6a">&gt;</span><span style="color:#e8bf6a">&lt;/li</span><span style="color:#e8bf6a">&gt;</span></div><div class="ln" style="top:655px">32</div><div class="code" style="top:691px">                <span style="color:#e8bf6a">&lt;li</span><span style="color:#e8bf6a">&gt;</span><span style="color:#e8bf6a">&lt;a</span> <span style="color:#bababa">href</span><span style="color:#a5c261">="article.html"</span><span style="color:#e8bf6a">&gt;</span><span style="color:#a9b7c6">Pop</span><span style="color:#e8bf6a">&lt;/a</span><span style="color:#e8bf6a">&gt;</span><span style="color:#e8bf6a">&lt;/li</span><span style="color:#e8bf6a">&gt;</span></div><div class="ln" style="top:691px">33</div><div class="code" style="top:727px"></div><div class="ln" style="top:727px">34</div><div class="code" style="top:763px">            <span style="color:#e8bf6a">&lt;/ul</span><span style="color:#e8bf6a">&gt;</span></div><div class="ln" style="top:763px">35</div><div class="code" style="top:799px">        <span style="color:#e8bf6a">&lt;/li</span><span style="color:#e8bf6a">&gt;</span></div><div class="ln" style="top:799px">36</div><div class="code" style="top:835px"></div><div class="ln" style="top:835px">37</div><div class="code" style="top:871px">        <span style="color:#e8bf6a">&lt;li</span><span style="color:#e8bf6a">&gt;</span><span style="color:#e8bf6a">&lt;a</span> <span style="color:#bababa">href</span><span style="color:#a5c261">="ajout-article.html"</span><span style="color:#e8bf6a">&gt;</span><span style="color:#a9b7c6">Ajout d'article</span><span style="color:#e8bf6a">&lt;/a</span><span style="color:#e8bf6a">&gt;</span><span style="color:#e8bf6a">&lt;/li</span><span style="color:#e8bf6a">&gt;</span></div><div class="ln" style="top:871px">38</div><div class="code" style="top:907px">        <span style="color:#e8bf6a">&lt;li</span> <span style="color:#bababa">class</span><span style="color:#a5c261">="u-hidden"</span><span style="color:#e8bf6a">&gt;</span><span style="color:#e8bf6a">&lt;a</span> <span style="color:#bababa">href</span><span style="color:#a5c261">="inscription.html"</span><span style="color:#e8bf6a">&gt;</span><span style="color:#a9b7c6">Inscription</span><span style="color:#e8bf6a">&lt;/a</span><span style="color:#e8bf6a">&gt;</span><span style="color:#e8bf6a">&lt;/li</span><span style="color:#e8bf6a">&gt;</span></div><div class="ln" style="top:907px">39</div><div class="code" style="top:943px">        <span style="color:#e8bf6a">&lt;li</span> <span style="color:#bababa">class</span><span style="color:#a5c261">="u-hidden"</span><span style="color:#e8bf6a">&gt;</span><span style="color:#e8bf6a">&lt;a</span> <span style="color:#bababa">href</span><span style="color:#a5c261">="#"</span> <span style="color:#bababa">id</span><span style="color:#a5c261">="connexion-lien"</span><span style="color:#e8bf6a">&gt;</span><span style="color:#a9b7c6">Connexion</span><span style="color:#e8bf6a">&lt;/a</span><span style="color:#e8bf6a">&gt;</span><span style="color:#e8bf6a">&lt;/li</span><span style="color:#e8bf6a">&gt;</span></div><div class="ln" style="top:943px">40</div><div class="code" style="top:979px"></div><div class="ln" style="top:979px">41</div><div class="code" style="top:1015px">        <span style="color:#e8bf6a">&lt;div</span> <span style="color:#bababa">class</span><span style="color:#a5c261">="bg-popup-cache"</span> <span style="color:#bababa">id</span><span style="color:#a5c261">="modale"</span><span style="color:#e8bf6a">&gt;</span></div><div class="ln" style="top:1015px">42</div><div class="code" style="top:1051px">            <span style="color:#e8bf6a">&lt;div</span> <span style="color:#bababa">class</span><span style="color:#a5c261">="connecter"</span> <span style="color:#e8bf6a">&gt;</span></div><div class="ln" style="top:1051px">43</div><div class="code" style="top:1087px">                <span style="color:#e8bf6a">&lt;a</span> <span style="color:#bababa">class</span><span style="color:#a5c261">="close"</span> <span style="color:#bababa">href</span><span style="color:#a5c261">="index.html"</span><span style="color:#e8bf6a">&gt;</span><span style="color:#a9b7c6">Fermer la page</span><span style="color:#e8bf6a">&lt;/a</span><span style="color:#e8bf6a">&gt;</span></div><div class="ln" style="top:1087px">44</div><div class="code" style="top:1123px">                <span style="color:#e8bf6a">&lt;h2</span><span style="color:#e8bf6a">&gt;</span><span style="color:#a9b7c6">Se connecter</span><span style="color:#e8bf6a">&lt;/h2</span><span style="color:#e8bf6a">&gt;</span></div><div class="ln" style="top:1123px">45</div><div class="code" style="top:1159px">                <span style="color:#e8bf6a">&lt;form</span> <span style="color:#bababa">action</span><span style="color:#a5c261">=""</span> <span style="color:#bababa">method</span><span style="color:#a5c261">="post"</span> <span style="color:#bababa">class</span><span style="color:#a5c261">="connexion"</span><span style="color:#e8bf6a">&gt;</span></div><div class="ln" style="top:1159px">46</div><div class="code" style="top:1195px"></div><div class="ln" style="top:1195px">47</div><div class="code" style="top:1231px">                    <span style="color:#e8bf6a">&lt;label</span> <span style="color:#bababa">for</span><span style="color:#a5c261">="identifier"</span><span style="color:#e8bf6a">&gt;</span><span style="color:#e8bf6a">&lt;/label</span><span style="color:#e8bf6a">&gt;</span></div><div class="ln" style="top:1231px">48</div><div class="code" style="top:1267px">                    <span style="color:#e8bf6a">&lt;input</span> <span style="color:#bababa">id</span><span style="color:#a5c261">="identifier"</span> <span style="color:#bababa">type</span><span style="color:#a5c261">="text"</span> <span style="color:#bababa">name</span><span style="color:#a5c261">="username"</span> <span style="color:#bababa">placeholder</span><span style="color:#a5c261">="Identifiant"</span> <span style="color:#bababa">required</span><span style="color:#e8bf6a">&gt;</span></div><div class="ln" style="top:1267px">49</div><div class="code" style="top:1303px">                    <span style="color:#e8bf6a">&lt;label</span> <span style="color:#bababa">for</span><span style="color:#a5c261">="connect-mdp"</span><span style="color:#e8bf6a">&gt;</span><span style="color:#e8bf6a">&lt;/label</span><span style="color:#e8bf6a">&gt;</span></div><div class="ln" style="top:1303px">50</div><div class="code" style="top:1339px">                    <span style="color:#e8bf6a">&lt;input</span> <span style="color:#bababa">id</span><span style="color:#a5c261">="connect-mdp"</span> <span style="color:#bababa">type</span><span style="color:#a5c261">="password"</span> <span style="color:#bababa">name</span><span style="color:#a5c261">="mdp"</span> <span style="color:#bababa">placeholder</span><span style="color:#a5c261">="Mot de passe ici"</span> <span style="color:#bababa">required</span><span style="color:#e8bf6a">&gt;</span></div><div class="ln" style="top:1339px">51</div><div class="code" style="top:1375px"></div><div class="ln" style="top:1375px">52</div><div class="code" style="top:1411px">                <span style="color:#e8bf6a">&lt;/form</span><span style="color:#e8bf6a">&gt;</span></div><div class="ln" style="top:1411px">53</div><div class="code" style="top:1447px">                <span style="color:#e8bf6a">&lt;button</span> <span style="color:#bababa">type</span><span style="color:#a5c261">="submit"</span><span style="color:#e8bf6a">&gt;</span><span style="color:#a9b7c6">Connectez-vous</span><span style="color:#e8bf6a">&lt;/button</span><span style="color:#e8bf6a">&gt;</span></div><div class="ln" style="top:1447px">54</div><div class="code" style="top:1483px">            <span style="color:#e8bf6a">&lt;/div</span><span style="color:#e8bf6a">&gt;</span></div><div class="ln" style="top:1483px">55</div>
<svg class="a" style="left:858px;top:572px;" width="140" height="7" viewBox="0 0 140 7"><polyline points="0.00,5.6 4.05,1.0 8.10,5.6 12.15,1.0 16.20,5.6 20.25,1.0 24.30,5.6 28.35,1.0 32.40,5.6 36.45,1.0 40.50,5.6 44.55,1.0 48.60,5.6 52.65,1.0 56.70,5.6 60.75,1.0 64.80,5.6 68.85,1.0 72.90,5.6 76.95,1.0 81.00,5.6 85.05,1.0 89.10,5.6 93.15,1.0 97.20,5.6 101.25,1.0 105.30,5.6 109.35,1.0 113.40,5.6 117.45,1.0 121.50,5.6 125.55,1.0 129.60,5.6 133.65,1.0 137.70,5.6" stroke="#5f9a66" stroke-width="1.5" fill="none"/></svg>
<svg class="a" style="left:1124px;top:644px;" width="70" height="7" viewBox="0 0 70 7"><polyline points="0.00,5.6 4.05,1.0 8.10,5.6 12.15,1.0 16.20,5.6 20.25,1.0 24.30,5.6 28.35,1.0 32.40,5.6 36.45,1.0 40.50,5.6 44.55,1.0 48.60,5.6 52.65,1.0 56.70,5.6 60.75,1.0 64.80,5.6 68.85,1.0" stroke="#5f9a66" stroke-width="1.5" fill="none"/></svg>
<svg class="a" style="left:1124px;top:680px;" width="126" height="7" viewBox="0 0 126 7"><polyline points="0.00,5.6 4.05,1.0 8.10,5.6 12.15,1.0 16.20,5.6 20.25,1.0 24.30,5.6 28.35,1.0 32.40,5.6 36.45,1.0 40.50,5.6 44.55,1.0 48.60,5.6 52.65,1.0 56.70,5.6 60.75,1.0 64.80,5.6 68.85,1.0 72.90,5.6 76.95,1.0 81.00,5.6 85.05,1.0 89.10,5.6 93.15,1.0 97.20,5.6 101.25,1.0 105.30,5.6 109.35,1.0 113.40,5.6 117.45,1.0 121.50,5.6 125.55,1.0" stroke="#5f9a66" stroke-width="1.5" fill="none"/></svg>
<svg class="a" style="left:816px;top:896px;" width="70" height="7" viewBox="0 0 70 7"><polyline points="0.00,5.6 4.05,1.0 8.10,5.6 12.15,1.0 16.20,5.6 20.25,1.0 24.30,5.6 28.35,1.0 32.40,5.6 36.45,1.0 40.50,5.6 44.55,1.0 48.60,5.6 52.65,1.0 56.70,5.6 60.75,1.0 64.80,5.6 68.85,1.0" stroke="#5f9a66" stroke-width="1.5" fill="none"/></svg>
<svg class="a" style="left:1096px;top:896px;" width="70" height="7" viewBox="0 0 70 7"><polyline points="0.00,5.6 4.05,1.0 8.10,5.6 12.15,1.0 16.20,5.6 20.25,1.0 24.30,5.6 28.35,1.0 32.40,5.6 36.45,1.0 40.50,5.6 44.55,1.0 48.60,5.6 52.65,1.0 56.70,5.6 60.75,1.0 64.80,5.6 68.85,1.0" stroke="#5f9a66" stroke-width="1.5" fill="none"/></svg>
<svg class="a" style="left:1082px;top:1040px;" width="84" height="7" viewBox="0 0 84 7"><polyline points="0.00,5.6 4.05,1.0 8.10,5.6 12.15,1.0 16.20,5.6 20.25,1.0 24.30,5.6 28.35,1.0 32.40,5.6 36.45,1.0 40.50,5.6 44.55,1.0 48.60,5.6 52.65,1.0 56.70,5.6 60.75,1.0 64.80,5.6 68.85,1.0 72.90,5.6 76.95,1.0 81.00,5.6" stroke="#5f9a66" stroke-width="1.5" fill="none"/></svg>
<svg class="a" style="left:858px;top:1076px;" width="126" height="7" viewBox="0 0 126 7"><polyline points="0.00,5.6 4.05,1.0 8.10,5.6 12.15,1.0 16.20,5.6 20.25,1.0 24.30,5.6 28.35,1.0 32.40,5.6 36.45,1.0 40.50,5.6 44.55,1.0 48.60,5.6 52.65,1.0 56.70,5.6 60.75,1.0 64.80,5.6 68.85,1.0 72.90,5.6 76.95,1.0 81.00,5.6 85.05,1.0 89.10,5.6 93.15,1.0 97.20,5.6 101.25,1.0 105.30,5.6 109.35,1.0 113.40,5.6 117.45,1.0 121.50,5.6 125.55,1.0" stroke="#5f9a66" stroke-width="1.5" fill="none"/></svg>
<svg class="a" style="left:1236px;top:1112px;" width="84" height="7" viewBox="0 0 84 7"><polyline points="0.00,5.6 4.05,1.0 8.10,5.6 12.15,1.0 16.20,5.6 20.25,1.0 24.30,5.6 28.35,1.0 32.40,5.6 36.45,1.0 40.50,5.6 44.55,1.0 48.60,5.6 52.65,1.0 56.70,5.6 60.75,1.0 64.80,5.6 68.85,1.0 72.90,5.6 76.95,1.0 81.00,5.6" stroke="#5f9a66" stroke-width="1.5" fill="none"/></svg>
<svg class="a" style="left:844px;top:1148px;" width="126" height="7" viewBox="0 0 126 7"><polyline points="0.00,5.6 4.05,1.0 8.10,5.6 12.15,1.0 16.20,5.6 20.25,1.0 24.30,5.6 28.35,1.0 32.40,5.6 36.45,1.0 40.50,5.6 44.55,1.0 48.60,5.6 52.65,1.0 56.70,5.6 60.75,1.0 64.80,5.6 68.85,1.0 72.90,5.6 76.95,1.0 81.00,5.6 85.05,1.0 89.10,5.6 93.15,1.0 97.20,5.6 101.25,1.0 105.30,5.6 109.35,1.0 113.40,5.6 117.45,1.0 121.50,5.6 125.55,1.0" stroke="#5f9a66" stroke-width="1.5" fill="none"/></svg>
<svg class="a" style="left:1698px;top:1292px;" width="154" height="7" viewBox="0 0 154 7"><polyline points="0.00,5.6 4.05,1.0 8.10,5.6 12.15,1.0 16.20,5.6 20.25,1.0 24.30,5.6 28.35,1.0 32.40,5.6 36.45,1.0 40.50,5.6 44.55,1.0 48.60,5.6 52.65,1.0 56.70,5.6 60.75,1.0 64.80,5.6 68.85,1.0 72.90,5.6 76.95,1.0 81.00,5.6 85.05,1.0 89.10,5.6 93.15,1.0 97.20,5.6 101.25,1.0 105.30,5.6 109.35,1.0 113.40,5.6 117.45,1.0 121.50,5.6 125.55,1.0 129.60,5.6 133.65,1.0 137.70,5.6 141.75,1.0 145.80,5.6 149.85,1.0 153.90,5.6" stroke="#5f9a66" stroke-width="1.5" fill="none"/></svg>
<svg class="a" style="left:1054px;top:1472px;" width="126" height="7" viewBox="0 0 126 7"><polyline points="0.00,5.6 4.05,1.0 8.10,5.6 12.15,1.0 16.20,5.6 20.25,1.0 24.30,5.6 28.35,1.0 32.40,5.6 36.45,1.0 40.50,5.6 44.55,1.0 48.60,5.6 52.65,1.0 56.70,5.6 60.75,1.0 64.80,5.6 68.85,1.0 72.90,5.6 76.95,1.0 81.00,5.6 85.05,1.0 89.10,5.6 93.15,1.0 97.20,5.6 101.25,1.0 105.30,5.6 109.35,1.0 113.40,5.6 117.45,1.0 121.50,5.6 125.55,1.0" stroke="#5f9a66" stroke-width="1.5" fill="none"/></svg>
<svg class="a" style="left:1194px;top:1472px;" width="56" height="7" viewBox="0 0 56 7"><polyline points="0.00,5.6 4.05,1.0 8.10,5.6 12.15,1.0 16.20,5.6 20.25,1.0 24.30,5.6 28.35,1.0 32.40,5.6 36.45,1.0 40.50,5.6 44.55,1.0 48.60,5.6 52.65,1.0" stroke="#5f9a66" stroke-width="1.5" fill="none"/></svg>
<svg class="a" style="left:447px;top:159px;" width="18" height="21" viewBox="0 0 18 21"><path d="M1.75 1.75H16.25V12.25L9 19.5L1.75 12.25Z" fill="#2b2b2b" stroke="#5f6162" stroke-width="1.6"/><path d="M5 8.8H13" stroke="#6b6d6e" stroke-width="1.8"/></svg>
<svg class="a" style="left:447px;top:483px;" width="18" height="21" viewBox="0 0 18 21"><path d="M1.75 1.75H16.25V12.25L9 19.5L1.75 12.25Z" fill="#2b2b2b" stroke="#5f6162" stroke-width="1.6"/><path d="M5 8.8H13" stroke="#6b6d6e" stroke-width="1.8"/></svg>
<svg class="a" style="left:447px;top:519px;" width="18" height="21" viewBox="0 0 18 21"><path d="M1.75 1.75H16.25V12.25L9 19.5L1.75 12.25Z" fill="#2b2b2b" stroke="#5f6162" stroke-width="1.6"/><path d="M5 8.8H13" stroke="#6b6d6e" stroke-width="1.8"/></svg>
<svg class="a" style="left:447px;top:591px;" width="18" height="21" viewBox="0 0 18 21"><path d="M1.75 1.75H16.25V12.25L9 19.5L1.75 12.25Z" fill="#2b2b2b" stroke="#5f6162" stroke-width="1.6"/><path d="M5 8.8H13" stroke="#6b6d6e" stroke-width="1.8"/></svg>
<svg class="a" style="left:447px;top:1023px;" width="18" height="21" viewBox="0 0 18 21"><path d="M1.75 1.75H16.25V12.25L9 19.5L1.75 12.25Z" fill="#2b2b2b" stroke="#5f6162" stroke-width="1.6"/><path d="M5 8.8H13" stroke="#6b6d6e" stroke-width="1.8"/></svg>
<svg class="a" style="left:447px;top:1059px;" width="18" height="21" viewBox="0 0 18 21"><path d="M1.75 1.75H16.25V12.25L9 19.5L1.75 12.25Z" fill="#2b2b2b" stroke="#5f6162" stroke-width="1.6"/><path d="M5 8.8H13" stroke="#6b6d6e" stroke-width="1.8"/></svg>
<svg class="a" style="left:447px;top:1167px;" width="18" height="21" viewBox="0 0 18 21"><path d="M1.75 1.75H16.25V12.25L9 19.5L1.75 12.25Z" fill="#2b2b2b" stroke="#5f6162" stroke-width="1.6"/><path d="M5 8.8H13" stroke="#6b6d6e" stroke-width="1.8"/></svg>
<svg class="a" style="left:447px;top:264px;" width="18" height="21" viewBox="0 0 18 21"><path d="M9 1.5L16.25 8.75V19.25H1.75V8.75Z" fill="#2b2b2b" stroke="#5f6162" stroke-width="1.6"/><path d="M5 13H13" stroke="#6b6d6e" stroke-width="1.8"/></svg>
<svg class="a" style="left:447px;top:768px;" width="18" height="21" viewBox="0 0 18 21"><path d="M9 1.5L16.25 8.75V19.25H1.75V8.75Z" fill="#2b2b2b" stroke="#5f6162" stroke-width="1.6"/><path d="M5 13H13" stroke="#6b6d6e" stroke-width="1.8"/></svg>
<svg class="a" style="left:447px;top:804px;" width="18" height="21" viewBox="0 0 18 21"><path d="M9 1.5L16.25 8.75V19.25H1.75V8.75Z" fill="#2b2b2b" stroke="#5f6162" stroke-width="1.6"/><path d="M5 13H13" stroke="#6b6d6e" stroke-width="1.8"/></svg>
<svg class="a" style="left:447px;top:1416px;" width="18" height="21" viewBox="0 0 18 21"><path d="M9 1.5L16.25 8.75V19.25H1.75V8.75Z" fill="#2b2b2b" stroke="#5f6162" stroke-width="1.6"/><path d="M5 13H13" stroke="#6b6d6e" stroke-width="1.8"/></svg>
<svg class="a" style="left:447px;top:1488px;" width="18" height="21" viewBox="0 0 18 21"><path d="M9 1.5L16.25 8.75V19.25H1.75V8.75Z" fill="#2b2b2b" stroke="#5f6162" stroke-width="1.6"/><path d="M5 13H13" stroke="#6b6d6e" stroke-width="1.8"/></svg>
<div class="a" style="left:2856px;top:160px;width:20px;height:20px;background:#c2951c;"></div>
<div class="a" style="left:2852px;top:256px;width:28px;height:4px;background:#b58a1e;"></div>
<div class="a" style="left:2852px;top:266px;width:28px;height:4px;background:#b58a1e;"></div>
<div class="a" style="left:2852px;top:296px;width:28px;height:4px;background:#b58a1e;"></div>
<div class="a" style="left:2852px;top:592px;width:28px;height:4px;background:#b58a1e;"></div>
<div class="a" style="left:2852px;top:730px;width:28px;height:4px;background:#b58a1e;"></div>
<div class="a" style="left:2852px;top:928px;width:28px;height:4px;background:#b58a1e;"></div>
<div class="a" style="left:2852px;top:938px;width:28px;height:4px;background:#b58a1e;"></div>
<div class="a" style="left:2852px;top:948px;width:28px;height:4px;background:#b58a1e;"></div>
<div class="a" style="left:2852px;top:958px;width:28px;height:4px;background:#b58a1e;"></div>
<div class="a" style="left:2852px;top:968px;width:28px;height:4px;background:#b58a1e;"></div>
<div class="a" style="left:2852px;top:978px;width:28px;height:4px;background:#b58a1e;"></div>
<div class="a" style="left:2852px;top:1234px;width:28px;height:4px;background:#b58a1e;"></div>
<div class="a" style="left:2852px;top:1244px;width:28px;height:4px;background:#b58a1e;"></div>
<div class="a" style="left:2852px;top:1254px;width:28px;height:4px;background:#b58a1e;"></div>
<div class="a" style="left:2852px;top:1264px;width:28px;height:4px;background:#b58a1e;"></div>
<div class="a" style="left:2852px;top:1274px;width:28px;height:4px;background:#b58a1e;"></div>
<div class="a" style="left:2852px;top:1284px;width:28px;height:4px;background:#b58a1e;"></div>
<div class="a" style="left:2860px;top:362px;width:14px;height:364px;border-radius:7px;background:rgba(255,255,255,0.14)"></div>
<div class="a" style="left:0px;top:1556px;width:2880px;height:2px;background:#2b2b2b;"></div>
<div class="a" style="left:0px;top:1558px;width:2880px;height:40px;background:#3c3f41;"></div>
<div class="a" style="left:0px;top:1597.5px;width:2880px;height:2.5px;background:#47484a;"></div>
<div class="a" style="left:0px;top:1600px;width:2880px;height:40px;background:#3c3f41;"></div>
<svg class="a" style="left:66px;top:1570px;" width="20" height="17" viewBox="0 0 20 17"><rect x="0" y="0" width="4" height="4" fill="#afb1b3"/><rect x="6" y="0" width="14" height="4" fill="#afb1b3"/><rect x="0" y="6.5" width="4" height="4" fill="#afb1b3"/><rect x="6" y="6.5" width="14" height="4" fill="#afb1b3"/><rect x="0" y="13" width="4" height="4" fill="#afb1b3"/><rect x="6" y="13" width="14" height="4" fill="#afb1b3"/></svg>
<div class="t" style="left:96.2px;top:1566.4px;font-size:24px;color:#bbbbbb;letter-spacing:-0.893px;">6: TODO</div>
<div class="a" style="left:96px;top:1588px;width:14px;height:2px;background:#bbbbbb;"></div>
<svg class="a" style="left:240px;top:1568px;" width="21" height="22" viewBox="0 0 21 22"><path d="M1.5 0V22" stroke="#afb1b3" stroke-width="3"/><path d="M1.5 13H12V6" stroke="#afb1b3" stroke-width="3" fill="none"/><path d="M4.5 7L12 0L19.5 7Z" fill="#afb1b3"/></svg>
<div class="t" style="left:270.0px;top:1566.4px;font-size:24px;color:#bbbbbb;letter-spacing:0.272px;">9: Version Control</div>
<div class="a" style="left:270px;top:1588px;width:14px;height:2px;background:#bbbbbb;"></div>
<svg class="a" style="left:513px;top:1568px;" width="23" height="20" viewBox="0 0 23 20"><rect x="0" y="0" width="23" height="20" fill="#afb1b3"/><path d="M4 4L9 9L4 14" stroke="#3c3f41" stroke-width="2" fill="none"/><path d="M11 16H19" stroke="#3c3f41" stroke-width="2"/></svg>
<div class="t" style="left:546.0px;top:1566.4px;font-size:24px;color:#bbbbbb;letter-spacing:0.400px;">Terminal</div>
<svg class="a" style="left:2680px;top:1566px;" width="27" height="26" viewBox="0 0 27 26"><path d="M25.5 24.5H13A11.5 11.5 0 1 1 24.5 13Z" stroke="#afb1b3" stroke-width="2.6" fill="none"/></svg>
<div class="t" style="left:2714.6px;top:1567.0px;font-size:24px;color:#bbbbbb;letter-spacing:-0.762px;">Event Log</div>
<svg class="a" style="left:12px;top:1610px;" width="24" height="24" viewBox="0 0 24 24"><path d="M1 6V23H18" stroke="#afb1b3" stroke-width="2.2" fill="none"/><rect x="5" y="1" width="18" height="18" stroke="#afb1b3" stroke-width="2.2" fill="none"/></svg>
<div class="t" style="left:2269.7px;top:1608.5px;font-size:24px;color:#bbbbbb;letter-spacing:-1.287px;">1:1</div>
<div class="t" style="left:2326.0px;top:1608.5px;font-size:24px;color:#bbbbbb;letter-spacing:-0.800px;">LF</div>
<div class="t" style="left:2374.0px;top:1608.5px;font-size:24px;color:#7b7d7f;letter-spacing:-0.325px;">UTF-8</div>
<div class="t" style="left:2466.8px;top:1608.5px;font-size:24px;color:#bbbbbb;letter-spacing:-0.737px;">4 spaces</div>
<div class="t" style="left:2590.4px;top:1608.5px;font-size:24px;color:#bbbbbb;letter-spacing:-0.326px;">Git: master</div>
<svg class="a" style="left:2733px;top:1606px;" width="24" height="26" viewBox="0 0 24 26"><path d="M2.8 12V7.8A5.2 5.2 0 0 1 13.2 7.8V12" stroke="#afb1b3" stroke-width="3.2" fill="none"/><rect x="7" y="12" width="16" height="12" fill="#afb1b3"/></svg>
<svg class="a" style="left:2784px;top:1605px;" width="24" height="28" viewBox="0 0 24 28"><path d="M4 9.5A8 8.5 0 0 1 20 9.5Z" fill="#afb1b3"/><rect x="0" y="8.5" width="24" height="2" fill="#afb1b3"/><circle cx="12" cy="17.5" r="6" stroke="#afb1b3" stroke-width="2.2" fill="none"/><circle cx="9.6" cy="16.5" r="1.2" fill="#afb1b3"/><circle cx="14.4" cy="16.5" r="1.2" fill="#afb1b3"/><path d="M9 19.8Q12 22.2 15 19.8" stroke="#afb1b3" stroke-width="1.4" fill="none"/><path d="M1 27C2.5 23.5 6 22.5 8 22.5H16C18 22.5 21.5 23.5 23 27Z" fill="#afb1b3"/></svg>
<svg class="a" style="left:2831px;top:1606px;" width="27" height="30" viewBox="0 0 27 30"><path fill-rule="evenodd" fill="#afb1b3" d="M16.12 8.22L18.79 8.52L18.79 12.48L16.12 12.78L15.79 13.57L17.47 15.67L14.67 18.47L12.57 16.79L11.78 17.12L11.48 19.79L7.52 19.79L7.22 17.12L6.43 16.79L4.33 18.47L1.53 15.67L3.21 13.57L2.88 12.78L0.21 12.48L0.21 8.52L2.88 8.22L3.21 7.43L1.53 5.33L4.33 2.53L6.43 4.21L7.22 3.88L7.52 1.21L11.48 1.21L11.78 3.88L12.57 4.21L14.67 2.53L17.47 5.33L15.79 7.43Z M9.5 7A3.5 3.5 0 1 0 9.51 7Z"/><path d="M14 12.5H20V20H14Z" fill="#3c3f41"/><path d="M15.5 16.5A5 5 0 1 1 23 20.5C21.5 21.8 20.5 22.5 20.5 24.5" stroke="#afb1b3" stroke-width="3" fill="none"/><rect x="19" y="26.5" width="3" height="3" fill="#afb1b3"/></svg>
<div class="a" style="left:0;top:1630px;width:10px;height:10px;background:radial-gradient(circle at 10px 0px, transparent 9.5px, #1b2132 10.5px)"></div>
<div class="a" style="left:2870px;top:1630px;width:10px;height:10px;background:radial-gradient(circle at 0px 0px, transparent 9.5px, #1b2132 10.5px)"></div>
</body></html>
